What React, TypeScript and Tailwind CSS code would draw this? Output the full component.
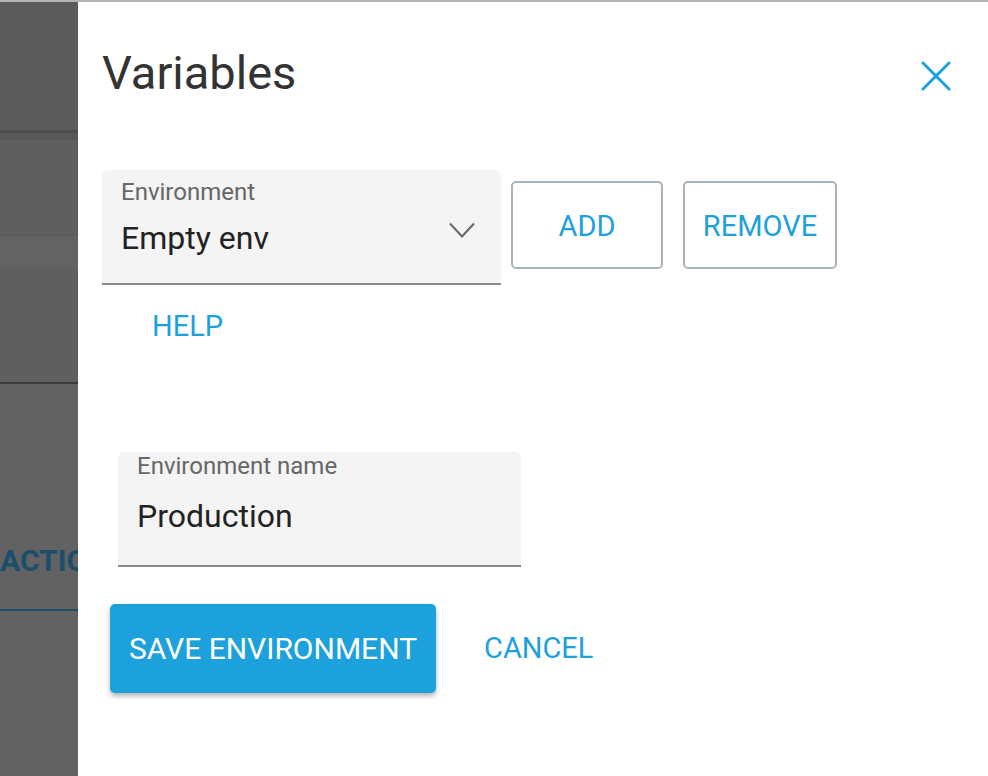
import React from 'react';

const BLUE = 'text-[#1da1dc]';

const App: React.FC = () => {
  return (
    <div className="w-[988px] h-[776px] flex flex-col overflow-hidden bg-white font-['Roboto',sans-serif]">
      <div className="h-[2px] bg-[#b4b4b4]"></div>
      <div className="flex flex-1">
        {/* dimmed page behind the dialog */}
        <aside className="w-[78px] flex flex-col overflow-hidden">
          <div className="h-[128px] bg-[#5b5b5b]"></div>
          <div className="h-[3px] bg-[#4d4d4d]"></div>
          <div className="h-[7px] bg-[#585858]"></div>
          <div className="h-[95px] bg-[#5f5f5f]"></div>
          <div className="h-[1px] bg-[#5a5a5a]"></div>
          <div className="h-[32px] bg-[#636363]"></div>
          <div className="h-[114px] bg-[#5f5f5f]"></div>
          <div className="h-[2px] bg-[#3b3b3b]"></div>
          <div className="flex-1 bg-[#626262] pt-[162px]">
            <div className="text-[30px] leading-[30px] font-bold text-[#1b4e6b] whitespace-nowrap">ACTIONS</div>
            <div className="mt-[33px] h-[2px] bg-[#1b4e6b]"></div>
          </div>
        </aside>

        <main className="flex-1 bg-white pl-[24px]">
          <div className="flex items-start justify-between pt-[47px] pr-[37px]">
            <h1 className="text-[47px] leading-[47px] text-[#333333]">Variables</h1>
            <button className="mt-[12px]">
              <svg width="30" height="30" viewBox="0 0 30 30">
                <path d="M2 2L28 28M28 2L2 28" stroke="#1da1dc" strokeWidth="3" strokeLinecap="round" />
              </svg>
            </button>
          </div>

          <div className="mt-[74px] flex items-start">
            <div className="w-[399px] h-[115px] bg-[#f4f4f4] rounded-t-[6px] border-b-2 border-[#8a8a8a] pl-[19px] pr-[26px] pt-[10px] flex items-start justify-between">
              <div>
                <div className="text-[24px] leading-[24px] text-[#666666]">Environment</div>
                <div className="mt-[18px] text-[32px] leading-[32px] text-[#222222]">Empty env</div>
              </div>
              <svg className="mt-[42px]" width="26" height="16" viewBox="0 0 26 16">
                <path d="M1 1.5L13 14.5L25 1.5" fill="none" stroke="#666666" strokeWidth="2" />
              </svg>
            </div>
            <div className="ml-[10px] mt-[11px] flex gap-[20px]">
              <button className={`w-[152px] h-[88px] pt-[4px] border-2 border-[#a8b5bd] rounded-[5px] text-[29px] ${BLUE}`}>ADD</button>
              <button className={`w-[154px] h-[88px] pt-[4px] border-2 border-[#a8b5bd] rounded-[5px] text-[29px] ${BLUE}`}>REMOVE</button>
            </div>
          </div>

          <button className={`mt-[27px] ml-[50px] block text-[29px] leading-[29px] ${BLUE}`}>HELP</button>

          <div className="mt-[111px] ml-[16px] w-[403px] h-[115px] bg-[#f4f4f4] rounded-t-[6px] border-b-2 border-[#8a8a8a] pl-[19px] pt-[2px]">
            <div className="text-[24px] leading-[24px] text-[#666666]">Environment name</div>
            <div className="mt-[22px] text-[32px] leading-[32px] text-[#222222]">Production</div>
          </div>

          <div className="mt-[37px] ml-[8px] flex items-center gap-[48px]">
            <button className="w-[326px] h-[89px] bg-[#1da1dc] rounded-[5px] text-white text-[30px] shadow-[0_3px_5px_rgba(0,0,0,0.3)]">
              SAVE ENVIRONMENT
            </button>
            <button className={`text-[29px] ${BLUE}`}>CANCEL</button>
          </div>
        </main>
      </div>
    </div>
  );
};

export default App;
